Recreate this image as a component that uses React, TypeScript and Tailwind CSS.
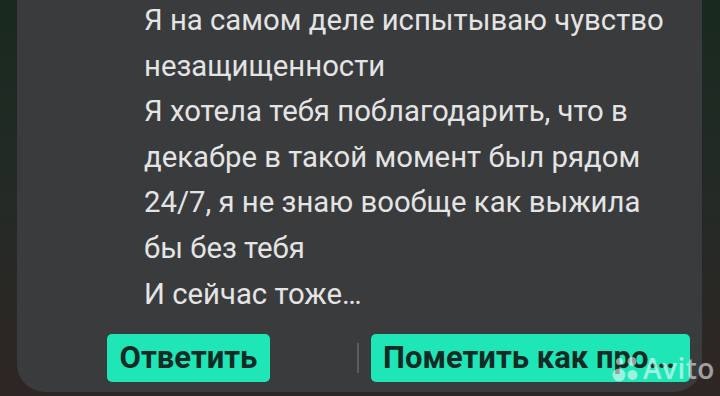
import React from "react";

const lines = [
  "Я на самом деле испытываю чувство",
  "незащищенности",
  "Я хотела тебя поблагодарить, что в",
  "декабре в такой момент был рядом",
  "24/7, я не знаю вообще как выжила",
  "бы без тебя",
  "И сейчас тоже…",
];

function AvitoMark() {
  return (
    <div className="absolute left-[611px] top-[353px] flex items-center gap-[2px] opacity-55">
      <svg width="30" height="30" viewBox="0 0 30 30">
        <circle cx="8" cy="22" r="6.5" fill="#ffffff" />
        <circle cx="21.5" cy="22" r="5" fill="#ffffff" />
        <circle cx="8.5" cy="8.5" r="3.5" fill="#ffffff" />
        <circle cx="21" cy="8.5" r="4.5" fill="#ffffff" />
      </svg>
      <span
        className="text-[28px] leading-none font-semibold text-white tracking-[0.5px]"
        style={{ fontFamily: "'Open Sans', sans-serif" }}
      >
        Avito
      </span>
    </div>
  );
}

export default function App() {
  return (
    <div
      className="relative w-[720px] h-[396px] overflow-hidden flex bg-gradient-to-b from-[#18291f] via-[#242a26] to-[#2e2624]"
      style={{ fontFamily: "Roboto, 'Noto Sans', sans-serif" }}
    >
      <div className="w-[17px] shrink-0" />
      <div className="w-[685px] h-[402px] -mt-[10px] bg-[#3a3b3d] rounded-b-[28px] flex flex-col">
        <div className="pl-[127px] pt-[8px] flex flex-col text-[29.3px] leading-[45.6px] text-[#e4e4e4]">
          {lines.map((l, i) => (
            <div key={i} className="whitespace-nowrap">
              {l}
            </div>
          ))}
        </div>
        <div className="mt-[17px] pl-[90px] flex items-center">
          <div className="w-[163px] h-[48px] rounded-[5px] bg-[#1ee6b6] flex items-center justify-center text-[31px] font-bold text-[#142a24]">
            Ответить
          </div>
          <div className="w-[2px] h-[30px] bg-[#5c5d60] ml-[87px] mr-[12px]" />
          <div className="w-[319px] h-[48px] rounded-[5px] bg-[#1ee6b6] flex items-center pl-[12px] text-[31px] font-bold text-[#142a24] whitespace-nowrap overflow-hidden">
            Пометить как про...
          </div>
        </div>
      </div>
      <AvitoMark />
    </div>
  );
}
